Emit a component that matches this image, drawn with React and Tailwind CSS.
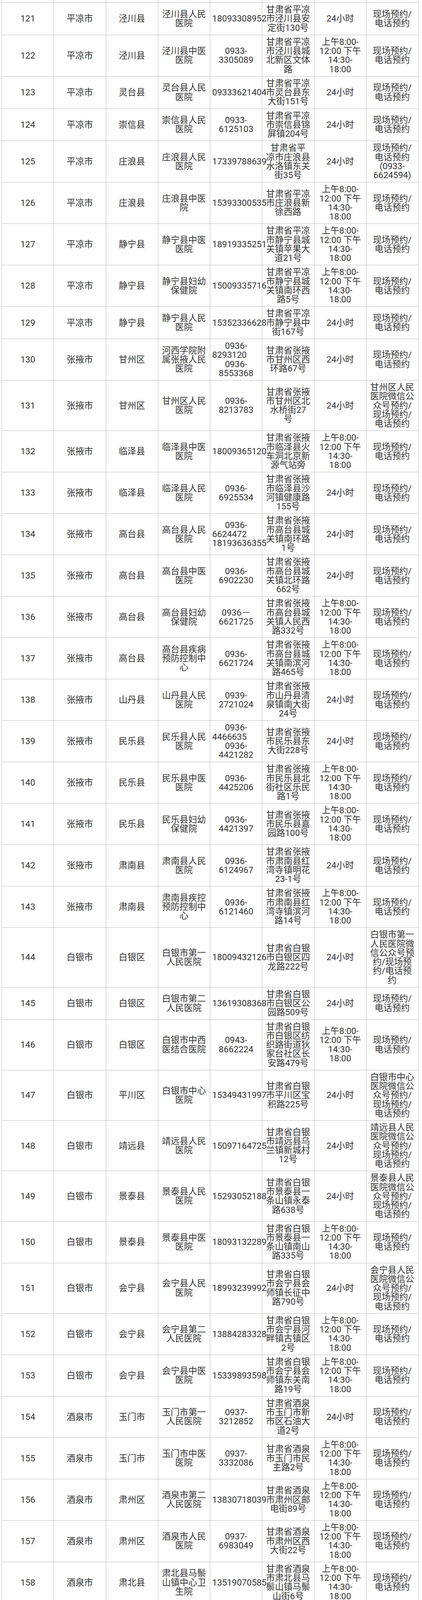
import React from "react";

const H = "上午8:00-|12:00 下午|14:30-|18:00";
const S = "现场预约/|电话预约";
const D = "24小时";

// one row per hospital; "|" marks a line break, a leading "<" keeps that line left-aligned
const rows = [
  ["121", "平凉市", "泾川县", "泾川县人民|医院", "18093308952", "甘肃省平凉|市泾川县安|定街130号", D, S],
  ["122", "平凉市", "泾川县", "泾川县中医|医院", "0933-|3305089", "甘肃省平凉|市泾川县城|北新区文体|路", H, S],
  ["123", "平凉市", "灵台县", "灵台县人民|医院", "09333621404", "甘肃省平凉|市灵台县东|大街151号", D, S],
  ["124", "平凉市", "崇信县", "崇信县人民|医院", "0933-|6125103", "甘肃省平凉|市崇信县锦|屏镇204号", D, S],
  ["125", "平凉市", "庄浪县", "庄浪县人民|医院", "17339788639", "甘肃省平|凉市庄浪县|水洛镇东关|街35号", D, "现场预约/|电话预约|(0933-|6624594)"],
  ["126", "平凉市", "庄浪县", "庄浪县中医|院", "15393300535", "甘肃省平凉|市庄浪县新|徐西路", H, S],
  ["127", "平凉市", "静宁县", "静宁县中医|医院", "18919335251", "甘肃省平凉|市静宁县城|关镇苹果大|道21号", H, S],
  ["128", "平凉市", "静宁县", "静宁县妇幼|保健院", "15009335716", "甘肃省平凉|市静宁县城|关镇南环西|路5号", H, S],
  ["129", "平凉市", "静宁县", "静宁县人民|医院", "15352336628", "甘肃省平凉|市静宁县中|街167号", D, S],
  ["130", "张掖市", "甘州区", "河西学院附|属张掖人民|医院", "0936-|<8293120|0936-|8553368", "甘肃省张掖|市甘州区西|环路67号", D, S],
  ["131", "张掖市", "甘州区", "甘州区人民|医院", "0936-|8213783", "甘肃省张掖|市甘州区北|水桥街27|号", D, "甘州区人民|医院微信公|众号预约/|现场预约/|电话预约"],
  ["132", "张掖市", "临泽县", "临泽县中医|医院", "18009365120", "甘肃省张掖|市临泽县火|车洞北京新|源气站旁", H, S],
  ["133", "张掖市", "临泽县", "临泽县人民|医院", "0936-|6925534", "甘肃省张掖|市临泽县沙|河镇健康路|155号", D, S],
  ["134", "张掖市", "高台县", "高台县人民|医院", "0936-|<6624472|18193636355", "甘肃省张掖|市高台县城|关镇南环路|1号", D, S],
  ["135", "张掖市", "高台县", "高台县中医|医院", "0936-|6902230", "甘肃省张掖|市高台县城|关镇北环路|662号", D, S],
  ["136", "张掖市", "高台县", "高台县妇幼|保健院", "0936－|6621725", "甘肃省张掖|市高台县城|关镇人民西|路332号", H, S],
  ["137", "张掖市", "高台县", "高台县疾病|预防控制中|心", "0936-|6621724", "甘肃省张掖|市高台县城|关镇南滨河|路465号", H, S],
  ["138", "张掖市", "山丹县", "山丹县人民|医院", "0939-|2721024", "甘肃省张掖|市山丹县清|泉镇南大街|24号", D, S],
  ["139", "张掖市", "民乐县", "民乐县人民|医院", "0936-|<4466635|0936-|4421282", "甘肃省张掖|市民乐县东|大街228号", D, S],
  ["140", "张掖市", "民乐县", "民乐县中医|医院", "0936-|4425206", "甘肃省张掖|市民乐县北|街社区乐民|路1号", H, S],
  ["141", "张掖市", "民乐县", "民乐县妇幼|保健院", "0936-|4421397", "甘肃省张掖|市民乐县嘉|园路100号", H, S],
  ["142", "张掖市", "肃南县", "肃南县人民|医院", "0936-|6124967", "甘肃省张掖|市肃南县红|湾寺镇明花|23-1号", D, S],
  ["143", "张掖市", "肃南县", "肃南县疾控|预防控制中|心", "0936-|6121460", "甘肃省张掖|市肃南县红|湾寺镇滨河|路14号", H, S],
  ["144", "白银市", "白银区", "白银市第一|人民医院", "18009432126", "甘肃省白银|市白银区四|龙路222号", D, "白银市第一|人民医院微|信公众号预|约/现场预|约/电话预|约"],
  ["145", "白银市", "白银区", "白银市第二|人民医院", "13619308368", "甘肃省白银|市白银区公|园路509号", D, S],
  ["146", "白银市", "白银区", "白银市中西|医结合医院", "0943-|8662224", "甘肃省白银|市白银区纺|织路街道狄|家台社区长|安路479号", H, S],
  ["147", "白银市", "平川区", "白银市中心|医院", "15349431997", "甘肃省白银|市平川区宝|积路225号", D, "白银市中心|医院微信公|众号预约/|现场预约/|电话预约"],
  ["148", "白银市", "靖远县", "靖远县人民|医院", "15097164725", "甘肃省白银|市靖远县乌|兰镇新城村|12号", D, "靖远县人民|医院微信公|众号预约/|现场预约/|电话预约"],
  ["149", "白银市", "景泰县", "景泰县人民|医院", "15293052188", "甘肃省白银|市景泰县一|条山镇永泰|路638号", D, "景泰县人民|医院微信公|众号预约/|现场预约/|电话预约"],
  ["150", "白银市", "景泰县", "景泰县中医|医院", "18093132289", "甘肃省白银|市景泰县一|条山镇南山|路335号", H, S],
  ["151", "白银市", "会宁县", "会宁县人民|医院", "18993239992", "甘肃省白银|市会宁县会|师镇长征中|路790号", D, "会宁县人民|医院微信公|众号预约/|现场预约/|电话预约"],
  ["152", "白银市", "会宁县", "会宁县第二|人民医院", "13884283328", "甘肃省白银|市会宁县河|畔镇古镇区|2号", H, S],
  ["153", "白银市", "会宁县", "会宁县中医|医院", "15339893598", "甘肃省白银|市会宁县会|师镇东关南|路19号", H, S],
  ["154", "酒泉市", "玉门市", "玉门市第一|人民医院", "0937-|3212852", "甘肃省酒泉|市玉门市新|市区石油大|道2号", D, S],
  ["155", "酒泉市", "玉门市", "玉门市中医|医院", "0937-|3332086", "甘肃省酒泉|市玉门市民|主路2号", H, S],
  ["156", "酒泉市", "肃州区", "酒泉市第二|人民医院", "13830718039", "甘肃省酒泉|市肃州区邮|电街89号", H, S],
  ["157", "酒泉市", "肃州区", "酒泉市人民|医院", "0937-|6983049", "甘肃省酒泉|市肃州区西|大街22号", H, S],
  ["158", "酒泉市", "肃北县", "肃北县马鬃|山镇中心卫|生院", "13519070585", "甘肃省酒泉|市肃北县马|鬃山镇马鬃|山街6号", H, S],
  ["159", "酒泉市", "肃北县", "肃北县人民|医院", "13993700167", "甘肃省酒泉|市肃北县党|城湾镇巴音|路11号", D, S],
  ["160", "酒泉市", "金塔县", "金塔县人民|医院", "15193775522", "甘肃省酒泉|市金塔县金|塔镇新华街|2号", D, S],
];

function Cell({ text }) {
  const lines = text.split("|");
  return (
    <div className="flex min-w-0 flex-col justify-center border-r border-[#bdbdbd] px-[5px] py-[6px]">
      {lines.map((l, i) =>
        l.startsWith("<") ? (
          <div key={i} className="h-[23.25px] whitespace-pre text-left">{l.slice(1)}</div>
        ) : (
          <div key={i} className="h-[23.25px] whitespace-pre text-center">{l}</div>
        )
      )}
    </div>
  );
}

function EmptyRow({ className }) {
  return (
    <div className={className}>
      {Array.from({ length: 8 }).map((_, i) => (
        <div key={i} className="border-r border-[#bdbdbd]" />
      ))}
    </div>
  );
}

export default function App() {
  return (
    <div className="h-[4332px] overflow-hidden bg-white">
      <div className="ml-[4px] w-[1067px] border-l border-[#bdbdbd] font-['Roboto','Noto_Sans_CJK_SC',sans-serif] text-[22.5px] leading-[23.25px] text-[#333333]">
        {/* tail of the row above */}
        <EmptyRow className="grid h-[7px] grid-cols-8 border-b border-[#bdbdbd]" />
        {rows.map((r) => (
          <div key={r[0]} className="grid grid-cols-8 border-b border-[#bdbdbd]">
            {r.map((c, i) => (
              <Cell key={i} text={c} />
            ))}
          </div>
        ))}
        {/* head of the row below */}
        <EmptyRow className="grid h-[40px] grid-cols-8" />
      </div>
    </div>
  );
}
